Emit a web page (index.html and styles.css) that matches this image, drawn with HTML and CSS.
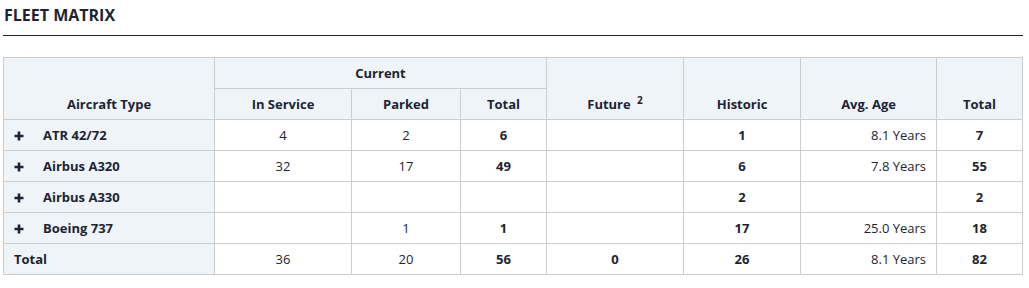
FILE: index.html
```html
<!DOCTYPE html>
<html lang="en">
<head>
<meta charset="utf-8">
<title>Fleet Matrix</title>
<link rel="stylesheet" href="styles.css">
</head>
<body>
<div class="wrap">
  <h2 class="title">FLEET MATRIX</h2>
  <table class="matrix">
    <colgroup>
      <col class="c-type">
      <col class="c-in">
      <col class="c-park">
      <col class="c-ctot">
      <col class="c-fut">
      <col class="c-hist">
      <col class="c-age">
      <col class="c-tot">
    </colgroup>
    <thead>
      <tr>
        <th rowspan="2" class="bottom">Aircraft Type</th>
        <th colspan="3">Current</th>
        <th rowspan="2" class="bottom">Future <sup>2</sup></th>
        <th rowspan="2" class="bottom">Historic</th>
        <th rowspan="2" class="bottom">Avg. Age</th>
        <th rowspan="2" class="bottom">Total</th>
      </tr>
      <tr>
        <th>In Service</th>
        <th>Parked</th>
        <th>Total</th>
      </tr>
    </thead>
    <tbody>
      <tr>
        <td class="type"><span class="plus"><svg width="10" height="10" viewBox="0 0 10 10"><path d="M5 0.5V9.5M0.5 5H9.5" stroke="#1c2434" stroke-width="2.6"/></svg></span>ATR 42/72</td>
        <td>4</td><td>2</td><td class="b">6</td><td></td><td class="b">1</td><td class="r">8.1 Years</td><td class="b">7</td>
      </tr>
      <tr>
        <td class="type"><span class="plus"><svg width="10" height="10" viewBox="0 0 10 10"><path d="M5 0.5V9.5M0.5 5H9.5" stroke="#1c2434" stroke-width="2.6"/></svg></span>Airbus A320</td>
        <td>32</td><td>17</td><td class="b">49</td><td></td><td class="b">6</td><td class="r">7.8 Years</td><td class="b">55</td>
      </tr>
      <tr>
        <td class="type"><span class="plus"><svg width="10" height="10" viewBox="0 0 10 10"><path d="M5 0.5V9.5M0.5 5H9.5" stroke="#1c2434" stroke-width="2.6"/></svg></span>Airbus A330</td>
        <td></td><td></td><td></td><td></td><td class="b">2</td><td class="r"></td><td class="b">2</td>
      </tr>
      <tr>
        <td class="type"><span class="plus"><svg width="10" height="10" viewBox="0 0 10 10"><path d="M5 0.5V9.5M0.5 5H9.5" stroke="#1c2434" stroke-width="2.6"/></svg></span>Boeing 737</td>
        <td></td><td>1</td><td class="b">1</td><td></td><td class="b">17</td><td class="r">25.0 Years</td><td class="b">18</td>
      </tr>
      <tr>
        <td class="type">Total</td>
        <td>36</td><td>20</td><td class="b">56</td><td class="b">0</td><td class="b">26</td><td class="r">8.1 Years</td><td class="b">82</td>
      </tr>
    </tbody>
  </table>
</div>
</body>
</html>
```
FILE: styles.css
```css
html, body {
  margin: 0;
  padding: 0;
  background: #ffffff;
}
body {
  font-family: "Open Sans", "Liberation Sans", sans-serif;
  color: #1c2434;
}
.wrap {
  margin-left: 3px;
  width: 1020px;
}
.title {
  margin: 0;
  padding: 4px 0 9px 1px;
  font-size: 16px;
  line-height: 22px;
  font-weight: 700;
  border-bottom: 1px solid #1e2532;
}
.matrix {
  margin-top: 21px;
  width: 1020px;
  table-layout: fixed;
  border-collapse: collapse;
  font-size: 13px;
  line-height: 20px;
}
.c-type { width: 211px; }
.c-in { width: 137px; }
.c-park { width: 109px; }
.c-ctot { width: 86px; }
.c-fut { width: 137px; }
.c-hist { width: 117px; }
.c-age { width: 136px; }
.c-tot { width: 86px; }

.matrix th,
.matrix td {
  border: 1px solid #cdcdcd;
  padding: 5px 10px;
  text-align: center;
  vertical-align: middle;
  white-space: nowrap;
}
.matrix th {
  background: #eff4f9;
  font-weight: 700;
}
.matrix th.bottom {
  vertical-align: bottom;
}
.matrix sup {
  font-size: 10px;
  line-height: 0;
  vertical-align: 5px;
  margin-left: 3px;
}
.matrix td {
  font-weight: 400;
}
.matrix td.b {
  font-weight: 700;
}
.matrix td.r {
  text-align: right;
}
.matrix td.type {
  background: #eff4f9;
  font-weight: 700;
  text-align: left;
}
.plus {
  display: inline-block;
  width: 10px;
  height: 10px;
  margin-right: 19px;
  vertical-align: -1px;
}
.plus svg {
  display: block;
}
```
